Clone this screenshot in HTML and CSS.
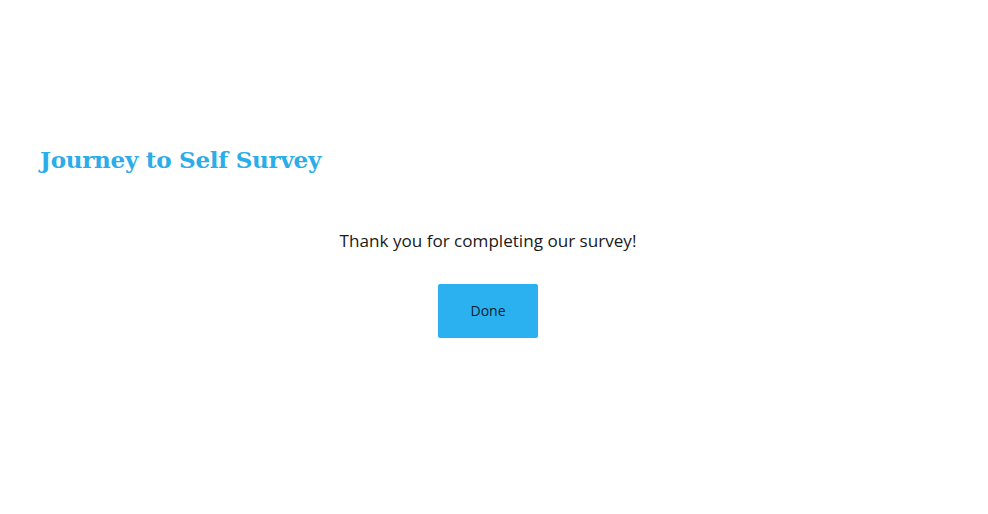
FILE: index.html
```html
<!DOCTYPE html>
<html>
<head>
<meta charset="utf-8">
<link rel="stylesheet" href="styles.css">
</head>
<body>
<div class="page">
  <h1 class="title">Journey to Self Survey</h1>
  <div class="thanks">
    <p class="message">Thank you for completing our survey!</p>
    <button class="done">Done</button>
  </div>
</div>
</body>
</html>
```

FILE: styles.css
```css
html, body {
  margin: 0;
  padding: 0;
  background: #ffffff;
}
.page {
  width: 976px;
  height: 514px;
  padding-top: 143px;
  box-sizing: border-box;
}
.title {
  margin: 0 0 0 40px;
  font-family: "DejaVu Serif", serif;
  font-weight: bold;
  font-size: 23.1px;
  line-height: 34px;
  color: #2aade8;
  letter-spacing: -0.3px;
}
.thanks {
  display: flex;
  flex-direction: column;
  align-items: center;
  margin-top: 51px;
}
.message {
  margin: 0;
  font-family: "Open Sans", sans-serif;
  font-size: 17.1px;
  line-height: 26px;
  color: #1a1a1a;
}
.done {
  margin-top: 30px;
  width: 100px;
  height: 54px;
  padding: 0 0 2px;
  border: none;
  border-radius: 2px;
  background: #2bb1f0;
  color: #0b2230;
  font-family: "Open Sans", sans-serif;
  font-size: 14px;
  cursor: pointer;
}
```
